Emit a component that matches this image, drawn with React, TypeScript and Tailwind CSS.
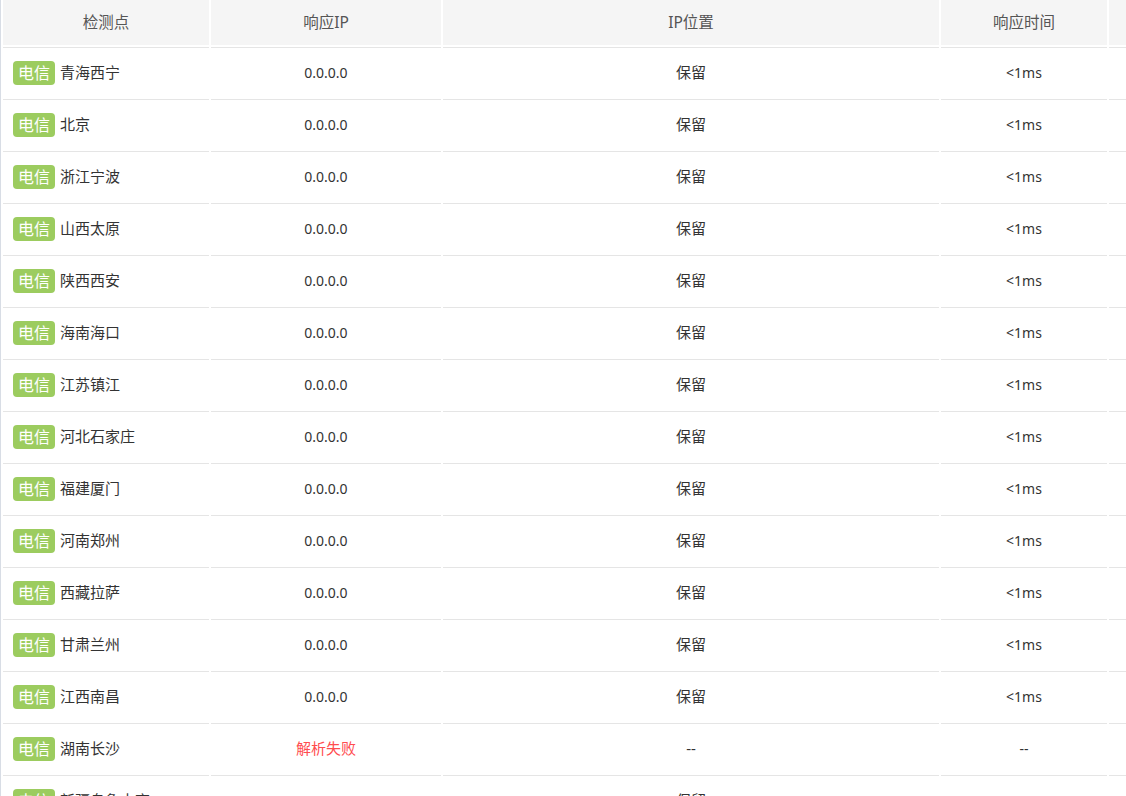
import React from 'react';

type Row = { city: string; ip: string; loc: string; time: string; failed?: boolean };

const cities = [
  '青海西宁', '北京', '浙江宁波', '山西太原', '陕西西安', '海南海口', '江苏镇江',
  '河北石家庄', '福建厦门', '河南郑州', '西藏拉萨', '甘肃兰州', '江西南昌',
];

const rows: Row[] = [
  ...cities.map((city) => ({ city, ip: '0.0.0.0', loc: '保留', time: '<1ms' })),
  { city: '湖南长沙', ip: '解析失败', loc: '--', time: '--', failed: true },
  { city: '新疆乌鲁木齐', ip: '0.0.0.0', loc: '保留', time: '<1ms' },
];

const cols = 'grid grid-cols-[206px_230px_496px_166px_200px] gap-x-[2px]';
const cell = 'flex h-[52px] items-center justify-center border-t border-[#e5e5e5] pb-[2px] text-[#333]';

export default function App() {
  return (
    <div
      className="h-screen w-full overflow-hidden bg-white"
      style={{ fontFamily: '"Noto Sans", "Noto Sans CJK SC", sans-serif' }}
    >
      <div className="flex h-full border-l border-[#d8dde5] pl-[2px]">
        <div className="w-max">
          {/* header */}
          <div className={cols}>
            {['检测点', '响应IP', 'IP位置', '响应时间', ''].map((h, i) => (
              <div
                key={i}
                className="flex h-[45px] items-center justify-center bg-[#f5f5f5] text-[15.5px] text-[#555]"
              >
                {h}
              </div>
            ))}
          </div>
          <div className="h-[2px]" />

          {/* rows */}
          {rows.map((r) => (
            <div key={r.city} className={cols}>
              <div className="flex h-[52px] items-center border-t border-[#e5e5e5] pb-[2px] pl-[10px] text-[15px] text-[#333]">
                <span className="mr-[5px] flex h-[24px] w-[42px] items-center justify-center rounded-[4px] bg-[#9ccc5f] text-[16px] text-white">
                  电信
                </span>
                {r.city}
              </div>
              <div
                className={`${cell} ${r.failed ? 'text-[15px] !text-[#ff4d4f]' : 'text-[14px]'}`}
              >
                {r.ip}
              </div>
              <div className={`${cell} text-[15px]`}>{r.loc}</div>
              <div className={`${cell} text-[14px]`}>{r.time}</div>
              <div className="h-[52px] border-t border-[#e5e5e5]" />
            </div>
          ))}
        </div>
      </div>
    </div>
  );
}
